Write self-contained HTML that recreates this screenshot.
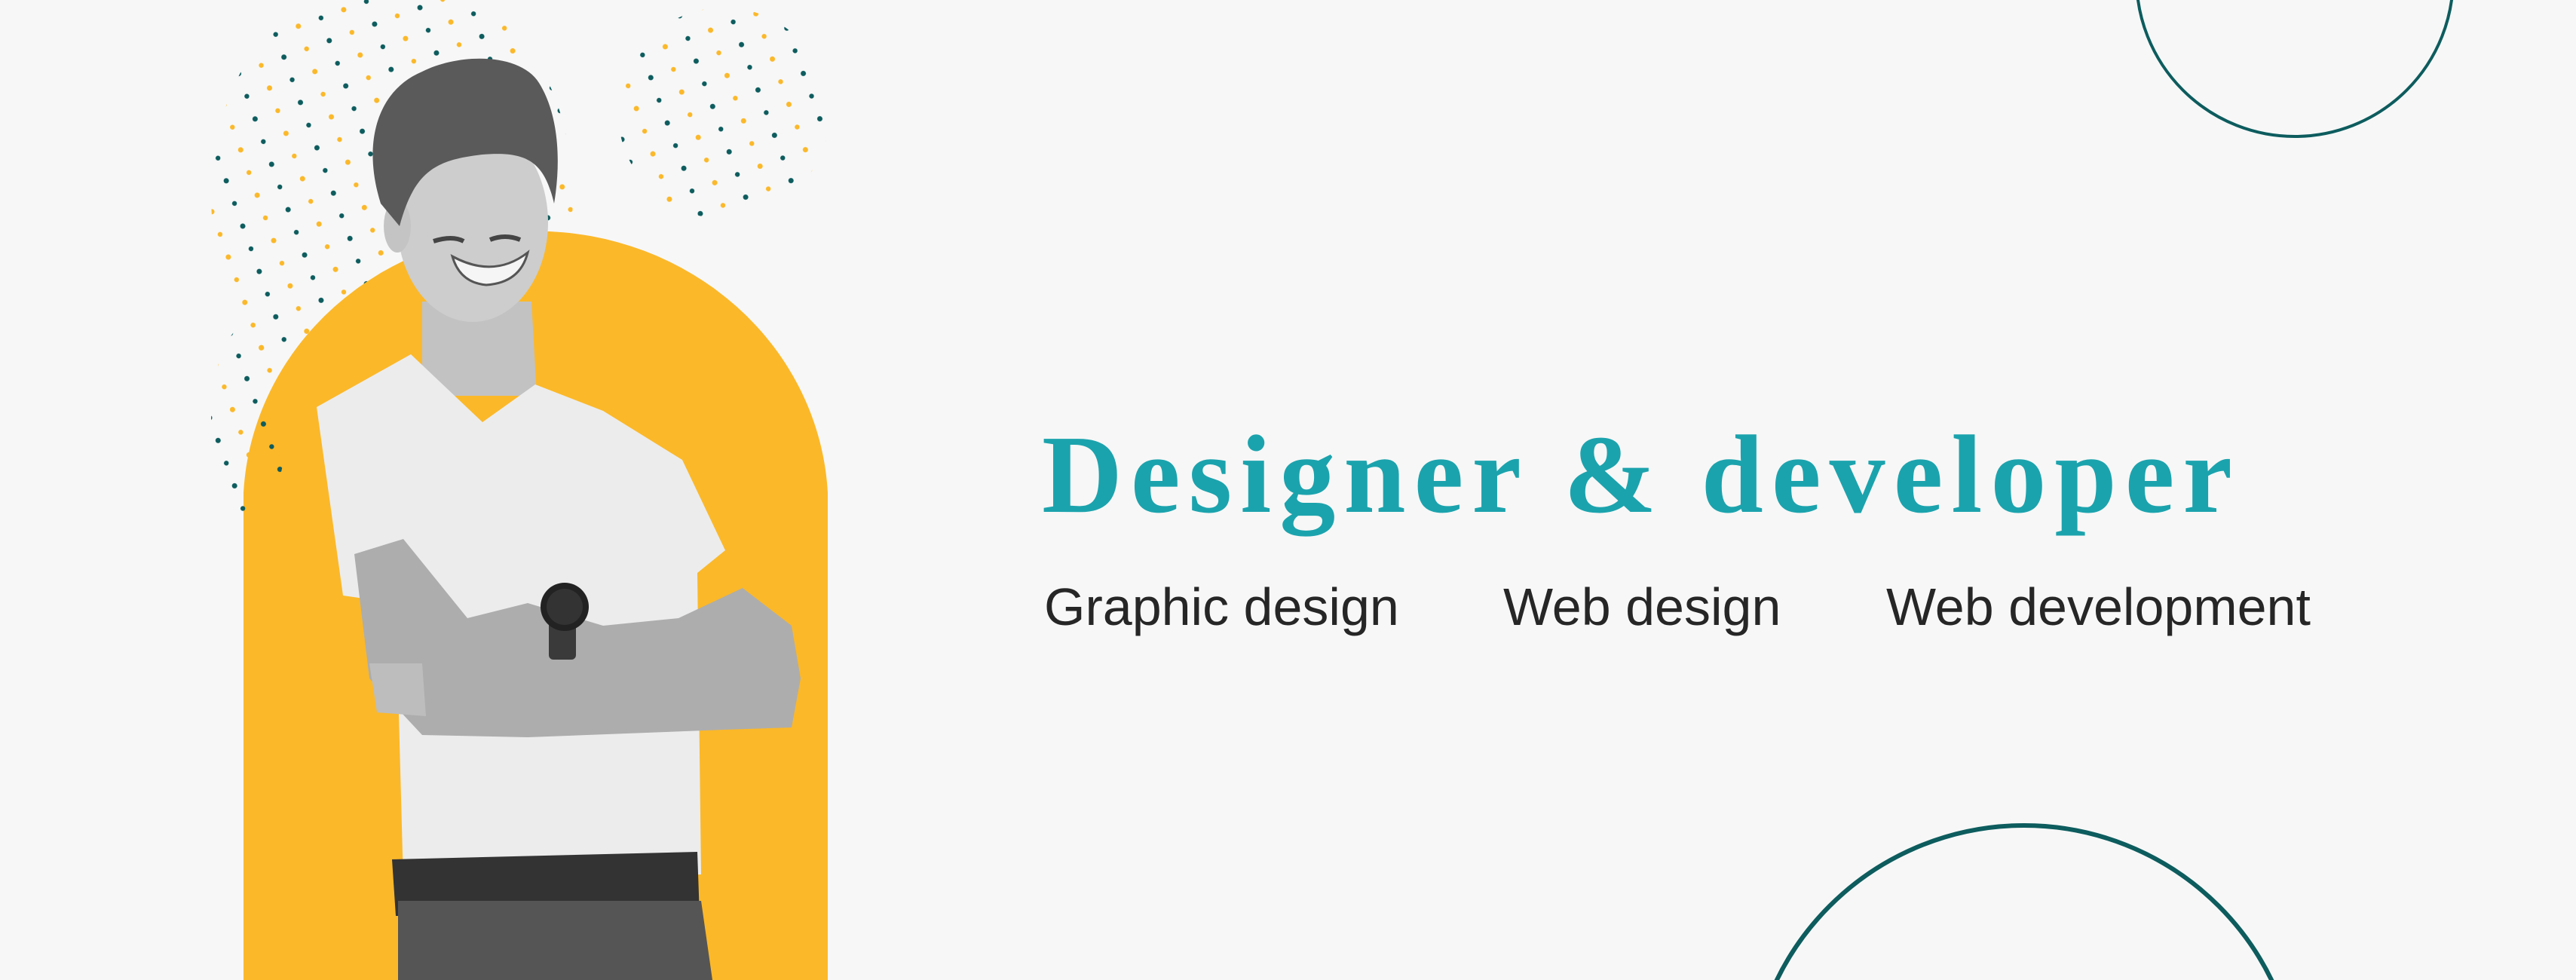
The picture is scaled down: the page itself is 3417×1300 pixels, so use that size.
<!DOCTYPE html>
<html><head><meta charset="utf-8"><style>
html,body{margin:0;padding:0;width:3417px;height:1300px;overflow:hidden;}
body{background:#f7f7f7;position:relative;font-family:"Liberation Sans",sans-serif;}
svg{position:absolute;left:0;top:0;display:block;}
.t{position:absolute;left:1382px;top:556px;font-family:"Liberation Serif",serif;font-weight:bold;font-size:148px;color:#1ba3ad;white-space:nowrap;line-height:1;letter-spacing:11px;}
.s{position:absolute;top:770px;font-size:70px;color:#262626;white-space:nowrap;line-height:1;}
</style></head><body>
<svg width="3417" height="1300" viewBox="0 0 3417 1300">
<defs>
<pattern id="dp" width="64" height="64" patternUnits="userSpaceOnUse" patternTransform="rotate(-20)">
<circle cx="8" cy="8" r="3.5" fill="#0d5c5e"/>
<circle cx="40" cy="40" r="3.5" fill="#fbb829"/>
<circle cx="40" cy="8" r="3.2" fill="#fbb829"/>
<circle cx="8" cy="40" r="3.2" fill="#0d5c5e"/>
</pattern>
</defs>
<circle cx="3044" cy="-29" r="210" fill="none" stroke="#0d5c5e" stroke-width="4"/>
<circle cx="2685" cy="1460" r="365" fill="none" stroke="#0d5c5e" stroke-width="6"/>
<ellipse cx="520" cy="260" rx="240" ry="300" fill="url(#dp)"/>
<ellipse cx="960" cy="150" rx="140" ry="140" fill="url(#dp)"/>
<path d="M323 1300 L323 654 A388 366 0 0 1 1098 654 L1098 1300 Z" fill="#fbb829"/>
<ellipse cx="330" cy="560" rx="50" ry="130" fill="url(#dp)"/>
<!-- person -->
<path d="M560 400 L705 400 L712 525 L560 525 Z" fill="#c2c2c2"/>
<path d="M420 540 L545 470 L640 560 L710 510 L800 545 L905 610 L962 730 L925 760 L930 1160 L535 1170 L525 800 L455 790 Z" fill="#ececec"/>
<path d="M470 735 L535 715 L620 820 L700 800 L800 830 L900 820 L985 780 L1050 830 L1062 900 L1050 965 L960 968 L700 978 L560 975 L490 900 Z" fill="#adadad"/>
<path d="M490 880 L560 880 L565 950 L500 945 Z" fill="#bdbdbd"/>
<rect x="728" y="805" width="36" height="70" rx="6" fill="#3a3a3a"/>
<circle cx="749" cy="805" r="32" fill="#222"/>
<circle cx="749" cy="805" r="24" fill="#333"/>
<path d="M520 1140 L925 1130 L928 1215 L525 1215 Z" fill="#333"/>
<path d="M528 1195 L930 1195 L945 1300 L528 1300 Z" fill="#555"/>
<ellipse cx="627" cy="295" rx="100" ry="132" fill="#cdcdcd"/>
<ellipse cx="527" cy="300" rx="18" ry="35" fill="#c4c4c4"/>
<path d="M505 270 C480 190 500 120 560 95 C610 70 690 70 715 110 C740 150 745 210 735 270 C722 215 700 200 640 205 C580 212 550 225 530 300 Z" fill="#5a5a5a"/>
<path d="M575 320 Q600 312 615 320 M650 318 Q670 310 690 318" stroke="#444" stroke-width="6" fill="none"/>
<path d="M600 340 Q655 370 700 335 Q690 375 645 378 Q610 375 600 340 Z" fill="#f5f5f5" stroke="#555" stroke-width="3"/>
</svg>
<div class="t">Designer &amp; developer</div>
<div class="s" style="left:1385px">Graphic design</div>
<div class="s" style="left:1994px">Web design</div>
<div class="s" style="left:2502px">Web development</div>
</body></html>
